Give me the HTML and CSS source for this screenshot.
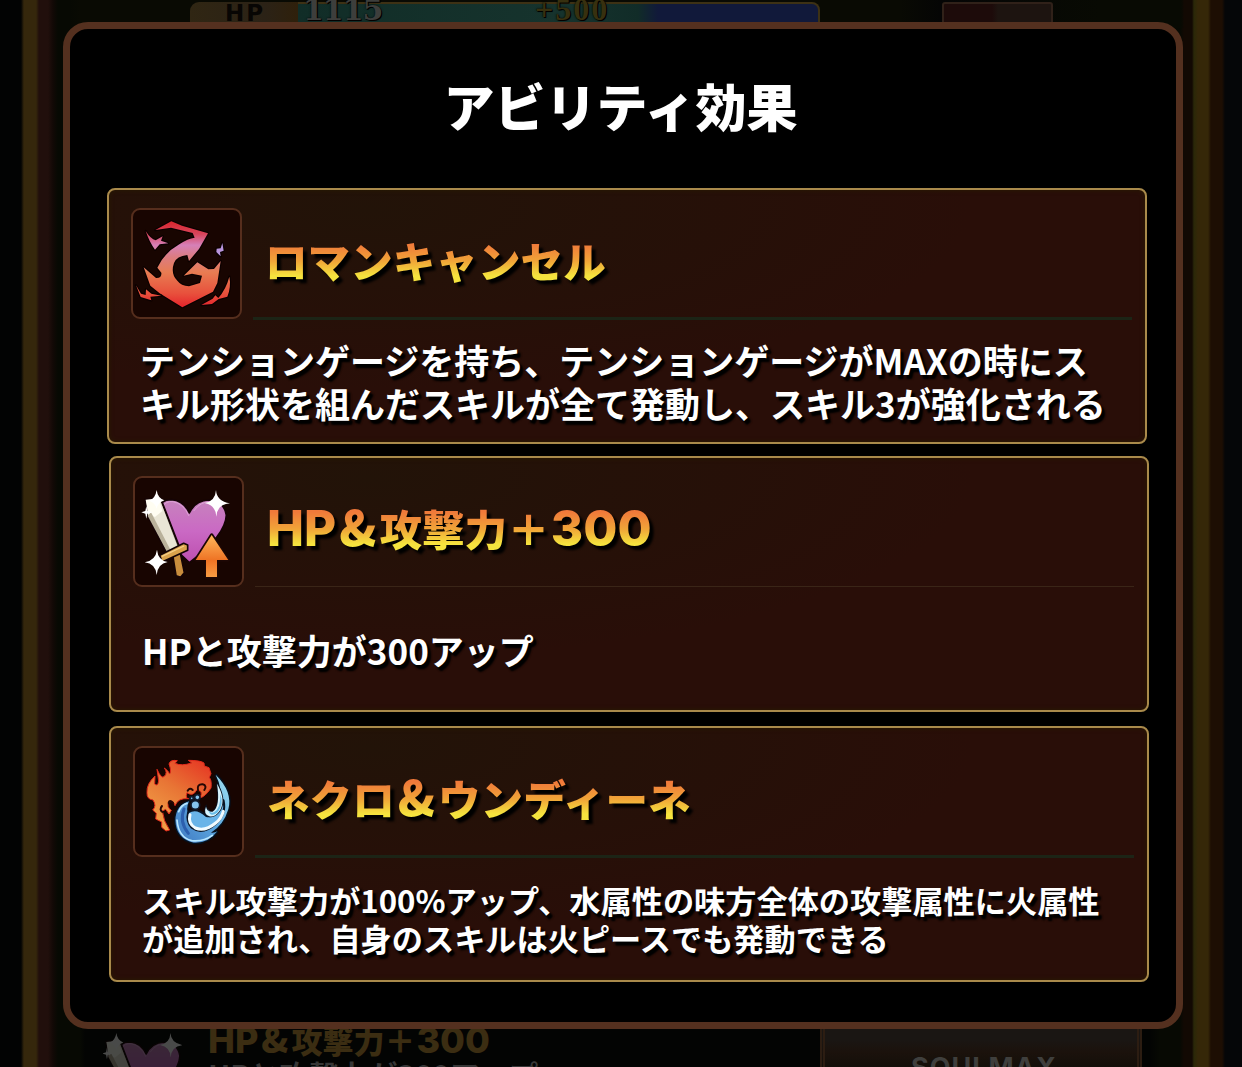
FILE: index.html
```html
<!DOCTYPE html>
<html lang="ja">
<head>
    <meta charset="UTF-8">
    <title>アビリティ効果</title>
    <link rel="stylesheet" href="styles.css">
</head>
<body>

<div class="screen">
    <div class="status">
        <div class="hp-label">HP</div>
        <div class="hp-bar"><span class="hp-now">1115</span><span class="hp-plus">+500</span></div>
        <div class="small-btn"></div>
    </div>
    <div class="bottom">
        <svg class="bottom-icon" viewBox="65 70 260 260"><use href="#heartSword"/></svg>
        <div class="bottom-text">
            <div class="bottom-name"><span class="latin">HP</span><span class="amp">&amp;</span>攻撃力＋<span class="latin num">300</span></div>
            <div class="bottom-desc">HPと攻撃力が300アップ</div>
        </div>
        <div class="soul-btn">SOULMAX</div>
    </div>
</div>

<div class="dialog">
    <h1>アビリティ効果</h1>

    <div class="card first">
        <div class="head">
            <svg class="icon" viewBox="39 31 321 321">
                <defs>
                    <linearGradient id="romanFill" gradientUnits="userSpaceOnUse" x1="0" y1="65" x2="0" y2="320">
                        <stop offset="0" stop-color="#d9252c"/>
                        <stop offset=".15" stop-color="#d8455c"/>
                        <stop offset=".28" stop-color="#d680b8"/>
                        <stop offset=".42" stop-color="#dc7c80"/>
                        <stop offset=".6" stop-color="#e87c52"/>
                        <stop offset=".85" stop-color="#e8503c"/>
                        <stop offset="1" stop-color="#e5262c"/>
                    </linearGradient>
                </defs>
                <g fill="url(#romanFill)" stroke="#0b0000" stroke-width="7" stroke-linejoin="round" paint-order="stroke">
                    <path d="M106 91 L154 65 L186 78 L264 101 L237 148 L207 184 L202 166 Q170 169 162 190 Q151 222 172 243 Q183 258 207 260 L240 250 L246 228 L216 222 L191 228 L232 188 L265 209 L282 208 L302 184 L292 250 L279 276 L187 323 L119 281 L91 258 L71 203 L108 235 Q126 236 124 219 L112 204 Q132 160 178 134 Q204 116 224 114 L218 100 L153 84 Z"/>
                    <path d="M77 94 Q92 118 107 122 L128 110 L123 123 L145 131 L119 134 L105 150 Q88 127 77 94Z"/>
                    <path fill="#b995dc" d="M307 130 L311 153 L300 157 L302 170 L289 157 L290 147 L302 146Z"/>
                    <path d="M48 257 L63 282 L77 286 L78 269 L94 282 L124 288 L91 291 L94 302 L62 292Z"/>
                    <path d="M328 231 Q334 260 322 291 L296 298 L276 313 L244 316 L278 297 L286 287 L295 295 Q318 269 328 231Z"/>
                </g>
            </svg>
            <div class="name"><span>ロマンキャンセル</span></div>
        </div>
        <p class="desc">テンションゲージを持ち、テンションゲージがMAXの時にス<br>キル形状を組んだスキルが全て発動し、スキル3が強化される</p>
    </div>

    <div class="card second">
        <div class="head">
            <svg class="icon" viewBox="44 31 321 321">
                <defs>
                    <linearGradient id="heartFill" x1="0" y1="0" x2="0" y2="1">
                        <stop offset="0" stop-color="#c783bd"/>
                        <stop offset=".5" stop-color="#ca69c4"/>
                        <stop offset="1" stop-color="#bd4faf"/>
                    </linearGradient>
                    <linearGradient id="arrowFill" x1="0" y1="0" x2="0" y2="1">
                        <stop offset="0" stop-color="#ffb75c"/>
                        <stop offset=".6" stop-color="#ee7324"/>
                        <stop offset="1" stop-color="#f79c43"/>
                    </linearGradient>
                </defs>
                <g id="heartSword" stroke-linejoin="round">
                    <path fill="url(#heartFill)" stroke="#150406" stroke-width="5" d="M207 136 Q190 98 153 96 Q117 96 113 130 Q113 200 207 285 Q316 203 318 142 Q311 99 266 97 Q225 98 207 136Z"/>
                    <path fill="none" stroke="#dca3d5" stroke-width="3" d="M125 118 Q137 99 158 102 Q189 107 206 145 M220 130 Q241 101 268 103"/>
                    <path fill="#8c8675" stroke="#150406" stroke-width="6" d="M75 95 L120 91 L177 238 L141 260 L82 144Z"/>
                    <path fill="#e9e5d5" d="M78 98 L94 105 L119 97 L172 237 L150 250 L100 155 L83 142Z"/>
                    <path fill="#fffdf2" d="M76 96 L115 92 L126 130 L104 148 L84 139Z"/>
                    <path fill="#b9b19b" d="M92 134 L152 250 L142 256 L82 144Z"/>
                    <path fill="#c88d3d" stroke="#150406" stroke-width="5" d="M157 262 L179 252 L192 315 L181 329 L167 324Z"/>
                    <path fill="#daa24c" stroke="#150406" stroke-width="5" d="M118 263 L190 227 L202 232 L202 248 L125 283Z"/>
                    <path fill="none" stroke="#f5ce85" stroke-width="4" d="M125 266 L191 235"/>
                    <path fill="url(#arrowFill)" stroke="#1c0704" stroke-width="10" paint-order="stroke" d="M274 202 L324 277 L290 277 L290 328 L257 328 L257 277 L226 277Z"/>
                    <g fill="#fff" stroke="none">
                        <path d="M109 67 Q112 91 132 98 Q112 105 109 123 Q104 105 87 99 Q105 92 109 67Z"/>
                        <path d="M287 67 Q289 101 329 107 Q290 110 288 147 Q286 112 253 106 Q285 101 287 67Z"/>
                        <path d="M110 246 Q113 278 142 283 Q112 288 109 322 Q106 288 73 284 Q106 278 110 246Z"/>
                        <path d="M78 115 L81 130 L98 134 L81 138 L78 153 L75 138 L63 134 L75 130Z"/>
                    </g>
                </g>
            </svg>
            <div class="name"><span><span class="latin">HP</span><span class="amp">&amp;</span>攻撃力＋<span class="latin num">300</span></span></div>
        </div>
        <p class="desc">HPと攻撃力が300アップ</p>
    </div>

    <div class="card third">
        <div class="head">
            <svg class="icon" viewBox="44 31 321 321">
                <defs>
                    <linearGradient id="fireFill" x1=".8" y1="0" x2=".2" y2="1">
                        <stop offset="0" stop-color="#e63d25"/>
                        <stop offset=".45" stop-color="#e87535"/>
                        <stop offset="1" stop-color="#f2a449"/>
                    </linearGradient>
                    <linearGradient id="waterFill" x1="1" y1="0" x2="0" y2="1">
                        <stop offset="0" stop-color="#a3e4f4"/>
                        <stop offset=".5" stop-color="#5ca7df"/>
                        <stop offset="1" stop-color="#3e77c0"/>
                    </linearGradient>
                </defs>
                <path fill="url(#fireFill)" stroke="#e02b1d" stroke-width="3" d="M80 165 Q78 139 104 115 L103 139 Q112 148 115 130 L110 95 Q124 126 132 116 Q143 105 132 91 Q144 99 148 109 Q154 99 146 79 Q150 65 171 69 L164 77 Q184 86 214 76 L204 68 Q241 68 251 76 L252 85 L266 90 L272 108 L267 119 Q275 129 272 151 Q253 179 239 180 Q251 158 228 158 Q218 178 200 165 Q194 183 205 183 Q173 180 164 204 Q161 187 145 193 Q138 208 153 218 L146 229 L136 215 L126 220 Q129 250 148 277 L137 280 L124 269 L124 253 L106 244 L108 227 L97 217 Q110 205 98 187 Q79 185 80 165Z"/>
                <g fill="none" stroke="#260704" stroke-width="6" stroke-linecap="round">
                    <path d="M202 159 Q208 149 217 157 M233 158 Q229 139 247 140 Q261 144 252 157 M145 196 Q147 185 158 195 M126 223 Q116 216 125 205"/>
                </g>
                <path fill="url(#waterFill)" stroke="#06101c" stroke-width="9" paint-order="stroke" d="M286 111 Q338 162 324 215 Q310 262 272 285 Q284 286 291 281 Q264 318 220 315 Q167 304 165 248 Q166 203 206 191 Q194 215 207 240 L262 244 Q282 241 302 205 Q306 150 286 111Z"/>
                <path fill="none" stroke="#2c5fae" stroke-width="9" stroke-linecap="round" d="M191 214 Q176 253 204 287"/>
                <path fill="none" stroke="#b7e6ff" stroke-width="5" stroke-linecap="round" d="M170 247 Q174 299 214 309 Q249 313 276 293 M175 222 Q182 202 200 197"/>
                <path fill="#69b4e8" stroke="#0a1524" stroke-width="12" paint-order="stroke" stroke-linejoin="round" d="M206 226 Q228 211 257 238 Q290 246 307 190 Q315 229 286 255 Q246 290 216 268 Q200 250 206 226Z"/>
                <path fill="none" stroke="#f1fbff" stroke-width="9" stroke-linecap="round" d="M209 231 Q202 258 225 271 Q253 283 286 256 Q303 243 309 221"/>
                <path fill="#d8f4fd" stroke="#0a1524" stroke-width="5" paint-order="stroke" d="M257 207 Q261 225 277 222 Q301 207 290 138 Q317 183 300 216 Q285 240 267 236 Q248 229 257 207Z"/>
                <path fill="#69bde8" d="M264 213 Q268 229 281 224 Q302 211 300 169 Q312 201 291 225 Q267 242 264 213Z"/>
                <g fill="#85c4ef" stroke="#101b2e" stroke-width="5">
                    <circle cx="225" cy="202" r="13"/>
                    <circle cx="231" cy="179" r="8"/>
                    <circle cx="214" cy="182" r="5"/>
                </g>
            </svg>
            <div class="name"><span>ネクロ<span class="amp">&amp;</span>ウンディーネ</span></div>
        </div>
        <p class="desc small">スキル攻撃力が100%アップ、水属性の味方全体の攻撃属性に火属性<br>が追加され、自身のスキルは火ピースでも発動できる</p>
    </div>
</div>

</body>
</html>
```

FILE: styles.css
```css
* {
    box-sizing: border-box;
}

body {
    margin: 0;
    width: 1242px;
    height: 1067px;
    overflow: hidden;
    position: relative;
    background: #020202;
    color: white;
    font-family: "Noto Sans CJK JP", "Noto Sans", sans-serif;
    white-space: nowrap;
}

/* dimmed game screen behind the dialog */
.screen {
    height: 1067px;
    display: flex;
    flex-direction: column;
    justify-content: space-between;
    overflow: hidden;
    background: linear-gradient(to right,
        #020303 0 21px, #35270c 24px 36px, #210f0c 39px 48px, #120906 53px, #070903 58px 80px,
        #030403 85px 1150px, #070903 1160px 1180px, #120903 1184px 1192px,
        #2a2808 1194px, #352708 1198px 1208px, #1d0e03 1211px 1222px, #050608 1225px);
}

.status {
    display: flex;
    height: 28px;
    padding: 2px 189px 0 190px;
    background: linear-gradient(to right, transparent 70px, #090a03 80px 900px, #050505 940px, #080a03 1100px 1180px, transparent 1184px);
}

.hp-label {
    width: 108px;
    padding-left: 35px;
    border-radius: 9px 0 0 0;
    background: linear-gradient(to right, #302613, #2b2216 70%, #2f200b);
    color: #080604;
    font: bold 23px/22px "DejaVu Sans", sans-serif;
    letter-spacing: 2px;
}

.hp-bar {
    width: 522px;
    height: 30px;
    border: 2px solid #3d3114;
    border-left: 0;
    border-radius: 0 8px 0 0;
    background: linear-gradient(to right, #112d27, #16332d 265px, #112c28 340px, #11193a 360px);
    font: bold 26px/10px "Liberation Serif", serif;
}

.hp-now {
    display: inline-block;
    width: 237px;
    padding-left: 5px;
    color: #3d3e3c;
    font-size: 30px;
    font-family: "DejaVu Serif", serif;
    letter-spacing: -1px;
    text-shadow: 0 0 2px black, 1px 1px black;
}

.hp-plus {
    color: #37300f;
    font-size: 32px;
    letter-spacing: 2px;
    text-shadow: 0 0 2px black, 1px 1px black;
}

.small-btn {
    width: 111px;
    margin-left: 122px;
    border: 2px solid #302119;
    border-radius: 3px;
    background: linear-gradient(to right, #1d0b0a 48px, #1d1410 54px);
}

.bottom {
    display: flex;
    height: 47px;
    padding-left: 103px;
}

.bottom-icon {
    width: 79px;
    height: 83px;
    margin: 12px 4px 0 0;
    opacity: .28;
}

.bottom-text {
    width: 634px;
    padding-left: 22px;
}

.bottom-name {
    height: 37px;
    color: #3b2d12;
    font-size: 31px;
    line-height: 40px;
    font-weight: 900;
}

.bottom-desc {
    color: #373737;
    font-size: 29.5px;
    font-weight: 700;
    line-height: 34px;
}

.soul-btn {
    width: 322px;
    height: 80px;
    padding: 19px 0 0 6px;
    border: 5px double #2c1d12;
    background: linear-gradient(#1a1613 15px, #1b120c 27px, #0f0e08 50px);
    color: #3f3f3d;
    text-align: center;
    font: bold 27px/48px Inter, sans-serif;
    letter-spacing: 1px;
}

.dialog {
    position: absolute;
    left: 63px;
    top: 22px;
    width: 1120px;
    height: 1007px;
    padding: 0 0 0 37px;
    border: 7px solid #54301f;
    border-radius: 25px;
    background: black;
}

h1 {
    width: 1040px;
    height: 159px;
    margin: 0;
    font-size: 51px;
    line-height: 152px;
    font-weight: 900;
    text-align: center;
    text-indent: -13px;
}

.card {
    width: 1040px;
    height: 256px;
    padding: 18px 13px 0 22px;
    border: 2px solid #a98a4b;
    border-radius: 8px;
    background:
        radial-gradient(ellipse at 25% 8%, #221308, transparent 55%),
        #290e08;
    box-shadow: inset 0 0 5px #281b00;
}

.second {
    margin: 12px 0 14px 2px;
}

.third {
    margin-left: 2px;
}

.head {
    display: flex;
    height: 112px;
}

.icon {
    width: 111px;
    height: 111px;
    border: 2px solid #562e1d;
    border-radius: 9px;
    background: #180501;
}

.name {
    flex: 1;
    margin-left: 11px;
    padding-left: 12px;
    border-bottom: 3px solid #1c2416;
    line-height: 103px;
    font-size: 42.6px;
    font-weight: 900;
}

.second .name {
    height: 111px;
    border-bottom: 1px solid #3a2517;
}

.name > span {
    display: inline-block;
    background: linear-gradient(#f0793a 36px, #f0a438 53px, #f5e33e 68px);
    -webkit-background-clip: text;
    background-clip: text;
    color: transparent;
    filter: drop-shadow(4px 4px 1px black);
}

/* wide letters and digits of the ability names */
.latin {
    font-family: Inter, sans-serif;
    font-size: 1.16em;
    font-weight: 800;
    line-height: 1px;
}

.num {
    margin-left: 1px;
}

.amp {
    font-size: 1.13em;
    line-height: 1px;
    margin: 0 3px;
}

.desc {
    height: 121px;
    margin: 0 0 0 9px;
    padding-top: 1px;
    display: flex;
    align-items: center;
    font-size: 35px;
    line-height: 43px;
    font-weight: 700;
    text-shadow: 3px 3px 2px black, 3px 4px 2px black;
}

.small {
    font-size: 31.2px;
    line-height: 38.5px;
}
```
